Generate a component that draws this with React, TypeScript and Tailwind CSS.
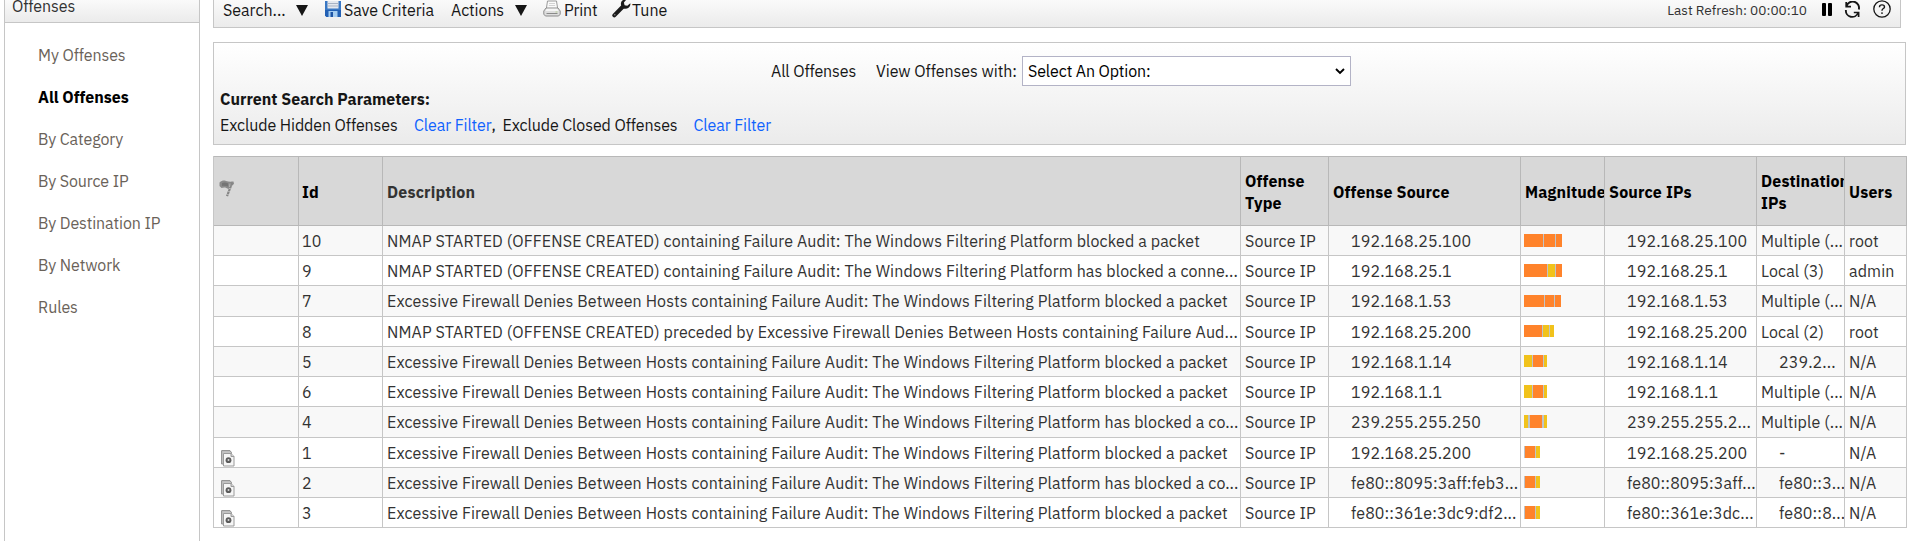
import type { ReactNode } from "react";

const NAV = ["My Offenses", "All Offenses", "By Category", "By Source IP", "By Destination IP", "By Network", "Rules"];

// Magnitude segments: colour class and width class, left to right.
type Segment = [string, string];
const ORANGE = "bg-[#ff832b]";
const YELLOW = "bg-[#f1c21b]";
const GAP = "bg-[#c0c4c8]";

type Offense = {
  id: string;
  height: string;
  hidden?: boolean;
  description: string;
  source: string;
  sourceIps: string;
  destination: string;
  indentDestination?: boolean;
  users: string;
  bar: Segment[];
  barBox?: string;
};

const PLATFORM = "containing Failure Audit: The Windows Filtering Platform";
const NMAP = "NMAP STARTED (OFFENSE CREATED)";
const FIREWALL = "Excessive Firewall Denies Between Hosts";

const MIXED_BAR: Segment[] = [[YELLOW, "w-[8px]"], [GAP, "w-px"], [ORANGE, "w-[10px]"], [GAP, "w-px"], [YELLOW, "w-[3px]"]];
const SMALL_BAR: Segment[] = [[GAP, "w-px"], [ORANGE, "w-[10px]"], [GAP, "w-px"], [YELLOW, "w-[4px]"]];

const OFFENSES: Offense[] = [
  {
    id: "10", height: "h-[30px]", description: `${NMAP} ${PLATFORM} blocked a packet`,
    source: "192.168.25.100", sourceIps: "192.168.25.100", destination: "Multiple (...", users: "root",
    bar: [[ORANGE, "w-[19px]"], [GAP, "w-px"], [ORANGE, "w-[11px]"], [GAP, "w-px"], [ORANGE, "w-[6px]"]],
    barBox: "mt-[8px] h-[13px]",
  },
  {
    id: "9", height: "h-[30px]", description: `${NMAP} ${PLATFORM} has blocked a conne...`,
    source: "192.168.25.1", sourceIps: "192.168.25.1", destination: "Local (3)", users: "admin",
    bar: [[ORANGE, "w-[23px]"], [GAP, "w-px"], [YELLOW, "w-[7px]"], [GAP, "w-px"], [ORANGE, "w-[6px]"]],
    barBox: "mt-[8px] h-[13px]",
  },
  {
    id: "7", height: "h-[31px]", description: `${FIREWALL} ${PLATFORM} blocked a packet`,
    source: "192.168.1.53", sourceIps: "192.168.1.53", destination: "Multiple (...", users: "N/A",
    bar: [[ORANGE, "w-[20px]"], [GAP, "w-px"], [ORANGE, "w-[9px]"], [GAP, "w-px"], [ORANGE, "w-[6px]"]],
    barBox: "mt-[9px] h-[12px]",
  },
  {
    id: "8", height: "h-[30px]", description: `${NMAP} preceded by ${FIREWALL} containing Failure Aud...`,
    source: "192.168.25.200", sourceIps: "192.168.25.200", destination: "Local (2)", users: "root",
    bar: [[ORANGE, "w-[18px]"], [GAP, "w-px"], [YELLOW, "w-[6px]"], [GAP, "w-px"], [YELLOW, "w-[4px]"]],
  },
  {
    id: "5", height: "h-[30px]", description: `${FIREWALL} ${PLATFORM} blocked a packet`,
    source: "192.168.1.14", sourceIps: "192.168.1.14", destination: "239.2...", indentDestination: true, users: "N/A",
    bar: MIXED_BAR,
  },
  {
    id: "6", height: "h-[30px]", description: `${FIREWALL} ${PLATFORM} blocked a packet`,
    source: "192.168.1.1", sourceIps: "192.168.1.1", destination: "Multiple (...", users: "N/A",
    bar: MIXED_BAR, barBox: "mt-[8px] h-[13px]",
  },
  {
    id: "4", height: "h-[31px]", description: `${FIREWALL} ${PLATFORM} has blocked a co...`,
    source: "239.255.255.250", sourceIps: "239.255.255.2...", destination: "Multiple (...", users: "N/A",
    bar: [[YELLOW, "w-[4px]"], [GAP, "w-[2px]"], [ORANGE, "w-[12px]"], [GAP, "w-[2px]"], [YELLOW, "w-[3px]"]],
    barBox: "mt-[8px] h-[13px]",
  },
  {
    id: "1", height: "h-[30px]", hidden: true, description: `${FIREWALL} ${PLATFORM} blocked a packet`,
    source: "192.168.25.200", sourceIps: "192.168.25.200", destination: "-", indentDestination: true, users: "N/A",
    bar: SMALL_BAR,
  },
  {
    id: "2", height: "h-[30px]", hidden: true, description: `${FIREWALL} ${PLATFORM} has blocked a co...`,
    source: "fe80::8095:3aff:feb3...", sourceIps: "fe80::8095:3aff...", destination: "fe80::3...", indentDestination: true, users: "N/A",
    bar: SMALL_BAR,
  },
  {
    id: "3", height: "h-[30px]", hidden: true, description: `${FIREWALL} ${PLATFORM} blocked a packet`,
    source: "fe80::361e:3dc9:df2...", sourceIps: "fe80::361e:3dc...", destination: "fe80::8...", indentDestination: true, users: "N/A",
    bar: SMALL_BAR, barBox: "mt-[8px] h-[13px]",
  },
];

const COLUMNS = "grid grid-cols-[85px_84px_858px_88px_192px_84px_152px_88px_62px]";

function FloppyIcon() {
  return (
    <svg width="16" height="16" viewBox="0 0 16 16">
      <path d="M0 0h16v16H1.5L0 14.5z" fill="#3a78c4" />
      <path d="M0 9h16v7H1.5L0 14.5z" fill="#2260b4" />
      <path d="M2.500 0h11v7.500h-11z" fill="#e4e8ee" />
      <path d="M2.500 2.500h11M2.500 5h11" stroke="#a9b3c4" />
      <path d="M3.500 10h9v6h-9z" fill="#a5cdf0" />
      <path d="M5.500 11h2.500v5H5.500z" fill="#1d54a5" />
    </svg>
  );
}

function PrinterIcon() {
  return (
    <svg width="18" height="17" viewBox="0 0 18 17">
      <path d="M4.5 1h9l1.2 8H3.3z" fill="#fafafa" stroke="#9a9a9a" />
      <path d="M6 3.5h6M5.8 5.5h6.4" stroke="#d2d2d2" />
      <path d="M3 8 .8 11v3.2L2.4 16h13.2l1.6-1.8V11L15 8z" fill="#dedede" stroke="#8c8c8c" />
      <path d="M3.500 8.700h11l.8 2.300H2.700z" fill="#f6f6f6" />
      <path d="M3.500 13.500h11" stroke="#8a8a8a" />
      <path d="M12.500 12h2" stroke="#b7cf9a" />
    </svg>
  );
}

function WrenchIcon() {
  return (
    <svg width="19" height="19" viewBox="0 0 19 19">
      <path d="M2.300 16.300 10.500 8" stroke="#1c1c1c" strokeWidth="4" strokeLinecap="round" />
      <path
        d="M14.600.3c-3-.6-6 1.800-5.700 5 .1 1.600 1 3.200 2.300 4 2.900 1.400 6.500-.2 7.100-3.300.1-.6.1-1.200 0-1.800l-3 2.500-2.700-.5-.7-2.600z"
        fill="#1c1c1c"
      />
      <circle cx="2.800" cy="15.800" r=".8" fill="#8a8a8a" />
    </svg>
  );
}

function RefreshIcon() {
  return (
    <svg width="17" height="17" viewBox="0 0 17 17" fill="none" stroke="#161616" strokeWidth="1.900">
      <path d="M2.600 5.200A6.300 6.300 0 0 1 14.800 8.500" />
      <path d="M1.900 9A6.300 6.300 0 0 0 14 12" />
      <path d="M2.200 1v4.700H7M14.600 16v-4.500H9.800" strokeWidth="1.700" />
    </svg>
  );
}

function HelpIcon() {
  return (
    <svg width="18" height="18" viewBox="0 0 18 18" fill="none" stroke="#161616">
      <circle cx="9" cy="9" r="8.200" strokeWidth="1.300" />
      <path d="M6.500 7.200V6.900c0-1.200 1-2 2.500-2s2.500.8 2.500 2c0 1.700-2.500 1.600-2.500 3.500v.4" strokeWidth="1.400" />
      <circle cx="9" cy="13.100" r=".9" fill="#161616" stroke="none" />
    </svg>
  );
}

function FlagIcon() {
  return (
    <svg width="16" height="17" viewBox="0 0 16 17">
      <path d="M.5 2.500C3 .5 5 .2 7 1c2.500.8 4 .9 7.500.6L15 4l-1.500 1L9.500 9C7 7.300 5 7 2.500 8L.5 6z" fill="#8a8a8a" />
      <path d="M3 3c2-1 4-.6 6 .3V6.500C7 5.800 5 5.500 3 6z" fill="#747474" />
      <path d="M13 3 8 16.200" stroke="#858585" strokeWidth="2.200" strokeDasharray="2.500 .6" />
      <path d="M11 3.500 10.500 7" stroke="#b4b4b4" />
    </svg>
  );
}

function HiddenIcon() {
  return (
    <svg width="14" height="17" viewBox="0 0 14 17">
      <path d="M.6.6h8.400l1.500 2V14H.6z" fill="#c4c4c4" stroke="#8e8e8e" />
      <path d="M2.500 3.500H10l3 3v9.500H2.500z" fill="#f6f6f6" stroke="#9a9a9a" />
      <path d="M10 3.500v3h3" fill="#d0d0d0" stroke="#9a9a9a" />
      <circle cx="7.500" cy="10.200" r="2.900" fill="#5c5c5c" />
      <circle cx="7.500" cy="10" r="1" fill="#d8d8d8" />
    </svg>
  );
}

function Triangle() {
  return (
    <svg width="12" height="11" viewBox="0 0 12 11">
      <path d="M0 0h12L6 11z" fill="#161616" />
    </svg>
  );
}

function HeadCell({ children, muted = false, indent = "pl-[4px]" }: { children?: ReactNode; muted?: boolean; indent?: string }) {
  return (
    <div
      className={
        "flex h-[69px] items-center overflow-hidden border-r border-[#b8b8b8] leading-[22px] font-bold tracking-[0.15px] " +
        indent +
        (muted ? " text-[#333333]" : " text-black")
      }
    >
      {children}
    </div>
  );
}

function Cell({ children, indent = "pl-[4px]" }: { children?: ReactNode; indent?: string }) {
  return (
    <div className={"overflow-hidden border-r border-[#c6c6c6] pt-[3px] leading-[24px] tracking-[0.115px] whitespace-nowrap " + indent}>
      {children}
    </div>
  );
}

export default function App() {
  return (
    <div className="flex h-[541px] w-[1907px] overflow-hidden bg-white font-['IBM_Plex_Sans',Roboto,sans-serif] text-[16px] text-[#323232]">
      <aside className="ml-[4px] w-[196px] shrink-0 border-x border-[#c6c6c6]">
        <div className="flex h-[23px] items-start border-b border-[#c6c6c6] bg-linear-to-b from-[#fafafa] to-[#ebebeb] pl-[7px]">
          <span className="-mt-[6px] leading-[24px] tracking-[-0.1px]">Offenses</span>
        </div>
        <nav className="flex flex-col pt-[11px]">
          {NAV.map((item) => (
            <a
              key={item}
              className={
                "flex h-[42px] items-center pl-[33px] " +
                (item === "All Offenses" ? "font-bold text-black" : "tracking-[-0.1px] text-[#6a6259]")
              }
            >
              {item}
            </a>
          ))}
        </nav>
      </aside>

      <main className="ml-[13px] flex w-[1694px] shrink-0 flex-col">
        <div className="flex h-[28px] w-[1688px] border-r border-b border-l border-[#c6c6c6] bg-linear-to-b from-[#fafafa] to-[#ebebeb] text-[#161616]">
          <div className="flex h-[20px] items-center pl-[9px] leading-[20px]">
            <span className="w-[73px]">Search...</span>
            <span className="w-[29px]"><Triangle /></span>
            <span className="-mt-[2px] w-[19px]"><FloppyIcon /></span>
            <span className="w-[107px] tracking-[-0.05px]">Save Criteria</span>
            <span className="w-[64px] tracking-[-0.1px]">Actions</span>
            <span className="w-[28px]"><Triangle /></span>
            <span className="-mt-[3px] w-[21px]"><PrinterIcon /></span>
            <span className="w-[48px] tracking-[-0.1px]">Print</span>
            <span className="-mt-[3px] w-[20px]"><WrenchIcon /></span>
            <span>Tune</span>
          </div>
          <div className="ml-auto flex h-[20px] items-center pr-[9px]">
            <span className="mr-[15px] text-[13.6px] text-[#323232]">Last Refresh: 00:00:10</span>
            <span className="mr-[12px] -mt-[2px] flex gap-[2px]">
              <i className="h-[13px] w-[4px] rounded-[1px] bg-black" />
              <i className="h-[13px] w-[4px] rounded-[1px] bg-black" />
            </span>
            <span className="-mt-[2px] mr-[12px]"><RefreshIcon /></span>
            <span className="-mt-[2px]"><HelpIcon /></span>
          </div>
        </div>

        <section className="mt-[14px] h-[103px] w-[1693px] border border-[#c6c6c6] bg-linear-to-b from-white to-[#ebebeb] text-[#161616]">
          <div className="mt-[13px] flex h-[30px] items-center pl-[557px]">
            <span className="w-[105px] tracking-[-0.12px]">All Offenses</span>
            <span className="w-[146px] tracking-[-0.05px]">View Offenses with:</span>
            <div className="flex h-[30px] w-[329px] items-center justify-between border border-[#b3b3c6] bg-white pr-[5px] pl-[5px] text-black">
              <span className="tracking-[-0.12px]">Select An Option:</span>
              <svg width="10" height="7" viewBox="0 0 10 7" fill="none" stroke="#000" strokeWidth="1.900">
                <path d="M1 1l4 4 4-4" />
              </svg>
            </div>
          </div>
          <div className="mt-px pl-[6px]">
            <div className="h-[25px] leading-[24px] font-bold">Current Search Parameters:</div>
            <div className="flex h-[26px] leading-[26px] tracking-[-0.1px]">
              <span className="w-[194px]">Exclude Hidden Offenses</span>
              <a className="text-[#0f62fe]">Clear Filter</a>
              <span className="w-[11px]">,</span>
              <span className="w-[191px]">Exclude Closed Offenses</span>
              <a className="text-[#0f62fe]">Clear Filter</a>
            </div>
          </div>
        </section>

        <div className="mt-[11px] border-l border-[#c6c6c6]">
          <div className={COLUMNS + " h-[70px] border-y border-[#b8b8b8] bg-[#d8d8d8]"}>
            <HeadCell indent="pl-[5px]"><span className="-mt-[6px]"><FlagIcon /></span></HeadCell>
            <HeadCell indent="pl-[3px]">Id</HeadCell>
            <HeadCell muted>Description</HeadCell>
            <HeadCell>Offense<br />Type</HeadCell>
            <HeadCell>Offense Source</HeadCell>
            <HeadCell>Magnitude</HeadCell>
            <HeadCell>Source IPs</HeadCell>
            <HeadCell>Destination<br />IPs</HeadCell>
            <HeadCell>Users</HeadCell>
          </div>
          {OFFENSES.map((o, i) => (
            <div
              key={o.id}
              className={COLUMNS + " border-b border-[#c6c6c6] " + o.height + (i % 2 === 0 ? " bg-[#f8f8f8]" : " bg-white")}
            >
              <Cell>
                {o.hidden && <span className="mt-[9px] ml-[3px] block"><HiddenIcon /></span>}
              </Cell>
              <Cell indent="pl-[3px]">{o.id}</Cell>
              <Cell>{o.description}</Cell>
              <Cell>Source IP</Cell>
              <Cell indent="pl-[22px]">{o.source}</Cell>
              <div className="border-r border-[#c6c6c6] pl-[3px]">
                <div className={"flex " + (o.barBox ?? "mt-[8px] h-[12px]")}>
                  {o.bar.map(([color, width], k) => (
                    <i key={k} className={color + " " + width} />
                  ))}
                </div>
              </div>
              <Cell indent="pl-[22px]">{o.sourceIps}</Cell>
              <Cell indent={o.indentDestination ? "pl-[22px]" : "pl-[4px]"}>{o.destination}</Cell>
              <Cell>{o.users}</Cell>
            </div>
          ))}
        </div>
      </main>
    </div>
  );
}
